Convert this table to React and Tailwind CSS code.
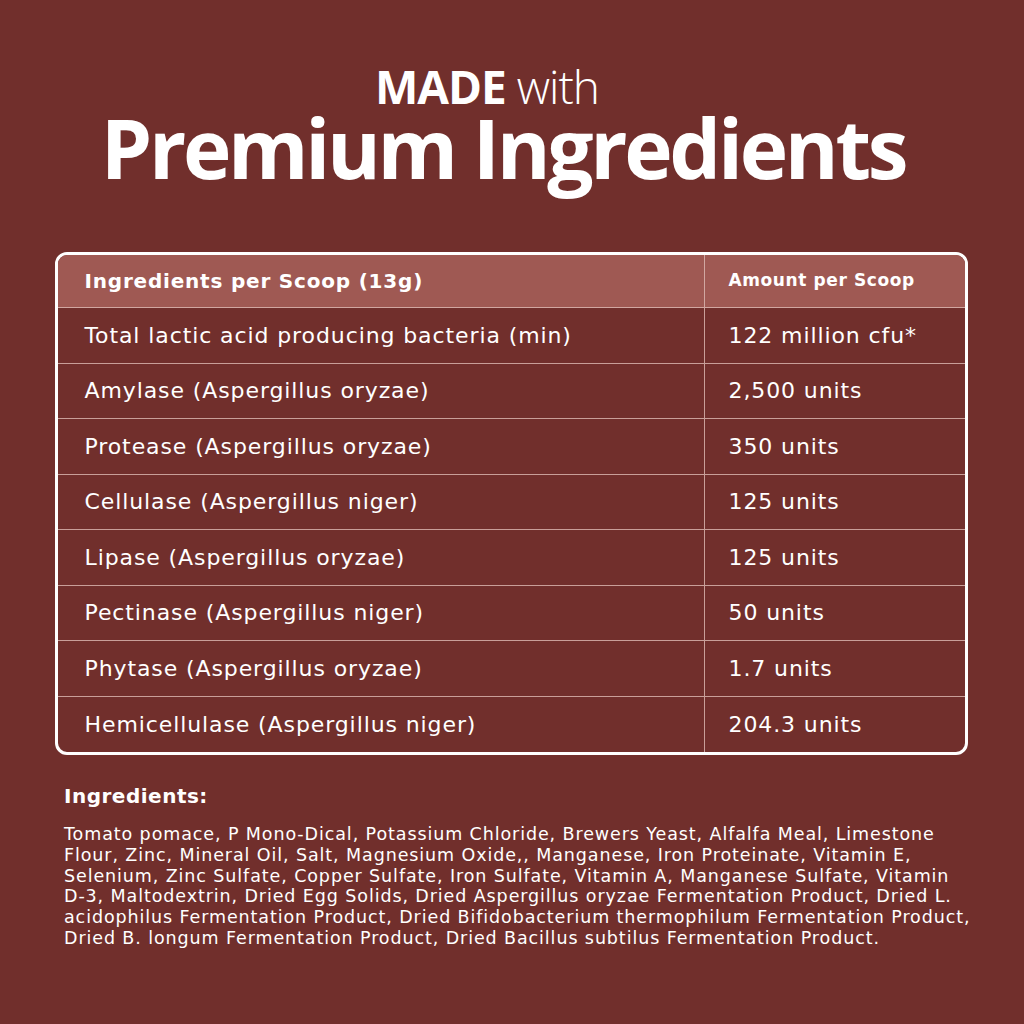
export default function App() {
  const rows = [
    ["Total lactic acid producing bacteria (min)", "122 million cfu*"],
    ["Amylase (Aspergillus oryzae)", "2,500 units"],
    ["Protease (Aspergillus oryzae)", "350 units"],
    ["Cellulase (Aspergillus niger)", "125 units"],
    ["Lipase (Aspergillus oryzae)", "125 units"],
    ["Pectinase (Aspergillus niger)", "50 units"],
    ["Phytase (Aspergillus oryzae)", "1.7 units"],
    ["Hemicellulase (Aspergillus niger)", "204.3 units"],
  ];
  const body = { fontFamily: "'DejaVu Sans', sans-serif" };
  return (
    <div className="w-[1024px] h-[1024px] bg-[#712f2c] text-white flex flex-col items-center overflow-hidden" style={{ fontFamily: "'Open Sans', sans-serif" }}>
      <div className="mt-[65px] ml-[-50px] text-[46px] leading-[42px] tracking-[-1px]">
        <span className="font-bold">MADE</span> <span className="font-light">with</span>
      </div>
      <div className="text-[82px] leading-[80px] font-bold tracking-[-3.3px] ml-[-18px]">Premium Ingredients</div>
      <div className="mt-[65px] w-[913px] ml-[-2px] border-[3px] border-white rounded-[12px] overflow-hidden" style={body}>
        <div className="flex h-[53px] bg-[#9f5953] border-b border-[#d1a7a1]">
          <div className="w-[647px] pl-[27px] flex items-center text-[20px] font-bold tracking-[0.8px] border-r border-[#d1a7a1]">Ingredients per Scoop (13g)</div>
          <div className="flex-1 pl-[24px] flex items-center text-[17px] font-bold tracking-[0.6px]">Amount per Scoop</div>
        </div>
        {rows.map(([a, b], i) => (
          <div key={i} className={"flex h-[55.5px] " + (i < rows.length - 1 ? "border-b border-[#c99f99]" : "")}>
            <div className="w-[647px] pl-[27px] flex items-center text-[22px] tracking-[0.9px] border-r border-[#c99f99]">{a}</div>
            <div className="flex-1 pl-[24px] flex items-center text-[22px] tracking-[0.9px]">{b}</div>
          </div>
        ))}
      </div>
      <div className="self-start ml-[64px] mt-[28px] w-[940px]" style={body}>
        <div className="text-[20px] font-bold leading-[26px] tracking-[0.5px]">Ingredients:</div>
        <p className="mt-[15px] text-[17.5px] leading-[20.8px] tracking-[0.9px] whitespace-nowrap">
          Tomato pomace, P Mono-Dical, Potassium Chloride, Brewers Yeast, Alfalfa Meal, Limestone<br />
          Flour, Zinc, Mineral Oil, Salt, Magnesium Oxide,, Manganese, Iron Proteinate, Vitamin E,<br />
          Selenium, Zinc Sulfate, Copper Sulfate, Iron Sulfate, Vitamin A, Manganese Sulfate, Vitamin<br />
          D-3, Maltodextrin, Dried Egg Solids, Dried Aspergillus oryzae Fermentation Product, Dried L.<br />
          acidophilus Fermentation Product, Dried Bifidobacterium thermophilum Fermentation Product,<br />
          Dried B. longum Fermentation Product, Dried Bacillus subtilus Fermentation Product.
        </p>
      </div>
    </div>
  );
}
